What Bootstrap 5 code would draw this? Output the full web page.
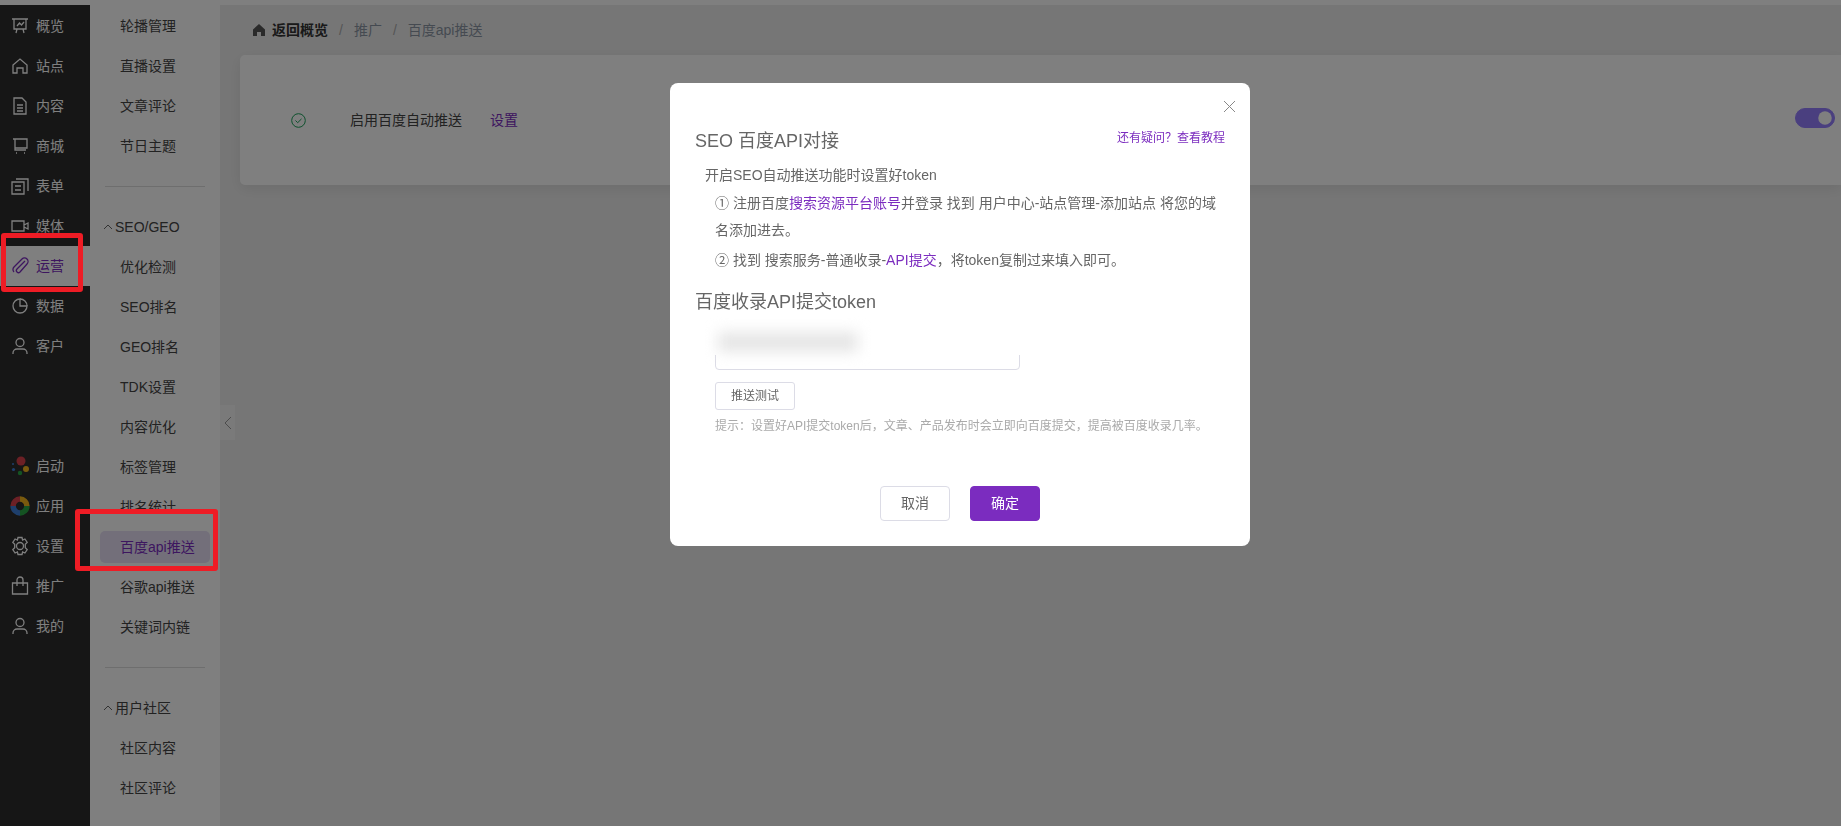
<!DOCTYPE html>
<html lang="zh">
<head>
    <meta charset="UTF-8">
    <meta name="viewport" content="width=device-width, initial-scale=1.0">
    <title>百度api推送</title>
    <link href="https://cdn.jsdelivr.net/npm/bootstrap@5.3.1/dist/css/bootstrap.min.css" rel="stylesheet">
    <style>
        body {
            font-family: "Liberation Sans", "Noto Sans CJK SC", sans-serif;
            font-size: 14px;
            color: #444;
            background: #ededed;
            height: 826px;
            overflow: hidden;
        }
        .top-strip { height: 5px; background: #fff; }
        .page-wrap { height: 821px; }

        /* 左侧主菜单 */
        .side-main { width: 90px; background: #2c2c2c; padding-top: 1px; flex: none; }
        .main-item {
            height: 40px; padding-left: 10px; gap: 6px;
            color: #fff; text-decoration: none; white-space: nowrap;
        }
        .main-item svg { width: 20px; height: 20px; flex: none; }
        .main-item.active-item { background: #fff; color: #7b2cbf; }
        .main-gap { height: 80px; }

        /* 二级菜单 */
        .side-sub { width: 130px; background: #fff; padding-top: 1px; flex: none; position: relative; }
        .sub-item {
            display: flex; align-items: center; height: 40px; padding-left: 30px;
            color: #444; text-decoration: none;
        }
        .sub-item.active-sub { color: #7b2cbf; position: relative; z-index: 0; }
        .sub-item.active-sub::before {
            content: ""; position: absolute; left: 10px; right: 10px; top: 4px; bottom: 4px;
            background: #e6dff5; border-radius: 5px; z-index: -1;
        }
        .sub-head { height: 40px; padding-left: 12px; gap: 1px; }
        .sub-line { border-top: 1px solid #ddd; margin: 20px 15px 20px 15px; }
        .collapse-tab {
            position: absolute; left: 130px; top: 400px; width: 15px; height: 35px;
            background: #f5f5f5; display: flex; align-items: center; justify-content: center;
        }

        /* 内容区 */
        .main-area { flex: 1; padding-left: 20px; min-width: 0; }
        .crumb-row { height: 50px; padding-left: 12px; gap: 6px; }
        .crumb-row b { color: #333; }
        .crumb-row span { color: #8b95a3; }
        .crumb-row .crumb-sep { margin: 0 5px; color: #aaa; }
        .auto-card {
            height: 130px; background: #fff; border: 0; border-radius: 5px 0 0 5px;
            box-shadow: 0 4px 14px rgba(0,0,0,.08);
        }
        .auto-check { margin-left: 51px; width: 59px; }
        .auto-link { color: #7b2cbf; text-decoration: none; margin-left: 28px; }
        .auto-switch.form-check-input {
            width: 40px; height: 20px; margin: 0 6px 0 0; float: none;
            background-color: #947efe; border-color: #947efe;
        }

        /* 弹窗 */
        .modal-backdrop.show { opacity: .5; }
        .api-dialog { width: 580px; max-width: 580px; margin: 83px 0 0 670px; }
        .api-dialog .modal-content { height: 463px; border: 0; border-radius: 8px; padding: 0; }
        .api-close { position: absolute; right: 14px; top: 12px; width: 13px; height: 13px; padding: 0; border: 0; background: none; }
        .api-body { padding: 46px 25px 0 25px; color: #666; }
        .api-title { font-size: 18px; line-height: 24px; font-weight: 400; margin: 0; color: #666; }
        .api-help { font-size: 12px; color: #7b2cbf; text-decoration: none; }
        .api-link { color: #7b2cbf; text-decoration: none; }
        .api-intro { margin: 10px 0 0 10px; line-height: 24px; }
        .api-steps { margin: 3px 0 0 20px; line-height: 27px; padding-right: 5px; }
        .api-steps p { margin: 0 0 3px; }
        .token-wrap { position: relative; margin: 0 0 0 20px; width: 305px; height: 40px; }
        .token-input {
            position: absolute; left: 0; right: 0; bottom: 0; height: 34px; font-size: 13px;
            border: 1px solid #dcdce6; border-radius: 4px;
        }
        .token-blur {
            position: absolute; left: -15px; right: -160px; top: 0; height: 25px; background: #fff;
        }
        .token-blur::after {
            content: ""; position: absolute; left: 18px; top: 2px; width: 140px; height: 20px;
            background: #e6e6e6; filter: blur(7px);
        }
        .test-btn {
            font-size: 12px; color: #666; border: 1px solid #dcdce6; border-radius: 3px;
            padding: 0; width: 80px; height: 28px; margin: 12px 0 0 20px; background: #fff;
        }
        .api-hint { font-size: 12px; color: #aaa; margin: 7px 0 0 20px; line-height: 18px; }
        .api-foot { position: absolute; left: 210px; top: 403px; gap: 20px; }
        .foot-btn { width: 70px; height: 35px; padding: 0; font-size: 14px; border-radius: 4px; }
        .foot-cancel { background: #fff; color: #666; border: 1px solid #dcdce6; }
        .foot-ok { background: #7b2cbf; color: #fff; border: 1px solid #7b2cbf; }

        /* 截图上的红框标注 */
        .red-mark { position: fixed; border: 5px solid #ee1c25; border-radius: 3px; z-index: 1060; }
        .red-a { left: 1px; top: 233px; width: 82px; height: 59px; }
        .red-b { left: 75px; top: 509px; width: 143px; height: 62px; }
    </style>
</head>
<body>
    <div class="top-strip"></div>
    <div class="page-wrap d-flex">
        <!-- 左侧主菜单 -->
        <aside class="side-main" id="main-menu"></aside>

        <!-- 二级菜单 -->
        <aside class="side-sub" id="sub-menu">
            <div class="collapse-tab">
                <svg width="8" height="14" viewBox="0 0 8 14" fill="none" stroke="#999" stroke-width="1"><path d="M7 1 1 7l6 6"/></svg>
            </div>
        </aside>

        <!-- 内容区 -->
        <main class="main-area">
            <div class="crumb-row d-flex align-items-center">
                <svg width="14" height="14" viewBox="0 0 14 14" fill="#555"><path d="M7 1 1 6.5V13h4V9h4v4h4V6.5z"/></svg>
                <b>返回概览</b>
                <span class="crumb-sep">/</span><span>推广</span><span class="crumb-sep">/</span><span>百度api推送</span>
            </div>
            <div class="card auto-card flex-row align-items-center">
                <div class="auto-check d-flex">
                    <svg width="15" height="15" viewBox="0 0 15 15" fill="none" stroke="#18a058" stroke-width="1"><circle cx="7.5" cy="7.5" r="6.8"/><path d="m4.5 7.5 2.2 2.2 3.8-3.8"/></svg>
                </div>
                <span>启用百度自动推送</span>
                <a href="#" class="auto-link">设置</a>
                <div class="form-check form-switch ms-auto mb-0 p-0 d-flex">
                    <input class="form-check-input auto-switch" type="checkbox" role="switch" checked>
                </div>
            </div>
        </main>
    </div>

    <!-- 遮罩与弹窗 -->
    <div class="modal-backdrop show"></div>
    <div class="modal d-block" tabindex="-1">
        <div class="modal-dialog api-dialog">
            <div class="modal-content">
                <button type="button" class="api-close" aria-label="Close">
                    <svg width="13" height="13" viewBox="0 0 13 13" stroke="#888" stroke-width="1"><path d="m1 1 11 11M12 1 1 12"/></svg>
                </button>
                <div class="api-body">
                    <div class="d-flex justify-content-between">
                        <h5 class="api-title">SEO 百度API对接</h5>
                        <a href="#" class="api-help">还有疑问？查看教程</a>
                    </div>
                    <div class="api-intro">开启SEO自动推送功能时设置好token</div>
                    <div class="api-steps">
                        <p>① 注册百度<a href="#" class="api-link">搜索资源平台账号</a>并登录 找到 用户中心-站点管理-添加站点 将您的域名添加进去。</p>
                        <p>② 找到 搜索服务-普通收录-<a href="#" class="api-link">API提交</a>，将token复制过来填入即可。</p>
                    </div>
                    <h5 class="api-title mt-3 mb-3">百度收录API提交token</h5>
                    <div class="token-wrap">
                        <input type="text" class="form-control token-input">
                        <div class="token-blur"></div>
                    </div>
                    <button type="button" class="btn test-btn">推送测试</button>
                    <div class="api-hint">提示：设置好API提交token后，文章、产品发布时会立即向百度提交，提高被百度收录几率。</div>
                </div>
                <div class="api-foot d-flex">
                    <button type="button" class="btn foot-btn foot-cancel">取消</button>
                    <button type="button" class="btn foot-btn foot-ok">确定</button>
                </div>
            </div>
        </div>
    </div>

    <!-- 红框标注 -->
    <div class="red-mark red-a"></div>
    <div class="red-mark red-b"></div>

    <script>
        const s = 'fill="none" stroke="currentColor" stroke-width="1.3"';
        const icons = {
            board: `<svg viewBox="0 0 20 20" ${s}><path d="M2 3h16M4 3v10h12V3M7 13l-1 4M13 13l1 4M7 10l2.5-3 2 2L14 6"/></svg>`,
            home: `<svg viewBox="0 0 20 20" ${s}><path d="M3 9l7-6 7 6v8h-4v-5H7v5H3z"/></svg>`,
            doc: `<svg viewBox="0 0 20 20" ${s}><path d="M4 2h8l4 4v12H4zM7 9h6M7 12h6M7 15h6"/></svg>`,
            cart: `<svg viewBox="0 0 20 20" ${s}><path d="M3 3h14v9H5M5 3v11h11M6 17h1M14 17h1"/></svg>`,
            form: `<svg viewBox="0 0 20 20" ${s}><path d="M2 6h12v12H2zM6 3h12v12M5 10h6M5 14h6"/></svg>`,
            video: `<svg viewBox="0 0 20 20" ${s}><path d="M2 5h12v10H2zM14 9l4-2v6l-4-2"/></svg>`,
            clip: `<svg viewBox="0 0 20 20" ${s}><path d="M15 5l-8 8a2 2 0 0 0 3 3l7-8a3.5 3.5 0 0 0-5-5l-8 8a3.5 3.5 0 0 0 0 5"/></svg>`,
            pie: `<svg viewBox="0 0 20 20" ${s}><path d="M10 3a7 7 0 1 0 7 7h-7z"/><path d="M10 3a7 7 0 0 1 7 7"/></svg>`,
            user: `<svg viewBox="0 0 20 20" ${s}><circle cx="10" cy="6.5" r="4"/><path d="M3 18v-1a4 4 0 0 1 4-4h6a4 4 0 0 1 4 4v1"/></svg>`,
            start: `<svg viewBox="0 0 20 20"><circle cx="11" cy="5" r="4.5" fill="#d9414b"/><circle cx="16" cy="13" r="3" fill="#f2b51d"/><circle cx="10" cy="17" r="2.2" fill="#29a745"/><circle cx="3.5" cy="13.5" r="1.6" fill="#3d7fd9"/><circle cx="3" cy="8" r="1" fill="#3d7fd9"/></svg>`,
            apps: `<svg viewBox="0 0 20 20" fill="none" stroke-width="5.5"><path d="M3.1 10A6.9 6.9 0 0 1 10 3.1" stroke="#d9414b"/><path d="M10 3.1A6.9 6.9 0 0 1 16.9 10" stroke="#f2b51d"/><path d="M16.9 10A6.9 6.9 0 0 1 10 16.9" stroke="#29a745"/><path d="M10 16.9A6.9 6.9 0 0 1 3.1 10" stroke="#3d7fd9"/></svg>`,
            gear: `<svg viewBox="0 0 20 20" ${s}><circle cx="10" cy="10" r="3.5"/><path d="M8 1.500h4l.6 2.500 2.300-1 2.300 3.500-1.900 1.800v3.400l1.900 1.800-2.300 3.500-2.300-1-.6 2.500H8l-.6-2.500-2.300 1-2.300-3.500 1.900-1.800V8.300L2.800 6.500l2.300-3.500 2.300 1z"/></svg>`,
            bag: `<svg viewBox="0 0 20 20" ${s}><path d="M2.500 7h15v11h-15zM7 10V4a3 3 0 0 1 6 0v6"/></svg>`
        };
        const mainTop = [['board','概览'],['home','站点'],['doc','内容'],['cart','商城'],['form','表单'],['video','媒体'],['clip','运营',1],['pie','数据'],['user','客户']];
        const mainBottom = [['start','启动'],['apps','应用'],['gear','设置'],['bag','推广'],['user','我的']];
        const mainItem = m => `<a href="#" class="main-item d-flex align-items-center ${m[2] ? 'active-item' : ''}">${icons[m[0]]}<span>${m[1]}</span></a>`;
        document.getElementById('main-menu').innerHTML =
            mainTop.map(mainItem).join('') + '<div class="main-gap"></div>' + mainBottom.map(mainItem).join('');

        const chevron = '<svg width="12" height="8" viewBox="0 0 12 8" fill="none" stroke="#666" stroke-width="1"><path d="m2 6 4-4 4 4"/></svg>';
        const groups = [
            {items: ['轮播管理','直播设置','文章评论','节日主题']},
            {head: 'SEO/GEO', items: ['优化检测','SEO排名','GEO排名','TDK设置','内容优化','标签管理','排名统计','百度api推送','谷歌api推送','关键词内链']},
            {head: '用户社区', items: ['社区内容','社区评论']}
        ];
        const sub = document.getElementById('sub-menu');
        sub.insertAdjacentHTML('afterbegin', groups.map((g, i) =>
            (i ? '<div class="sub-line"></div>' : '') +
            (g.head ? `<div class="sub-head d-flex align-items-center">${chevron}<span>${g.head}</span></div>` : '') +
            g.items.map(t => `<a href="#" class="sub-item ${t === '百度api推送' ? 'active-sub' : ''}">${t}</a>`).join('')
        ).join(''));
    </script>
    <script src="https://cdn.jsdelivr.net/npm/bootstrap@5.3.1/dist/js/bootstrap.bundle.min.js"></script>
</body>
</html>
